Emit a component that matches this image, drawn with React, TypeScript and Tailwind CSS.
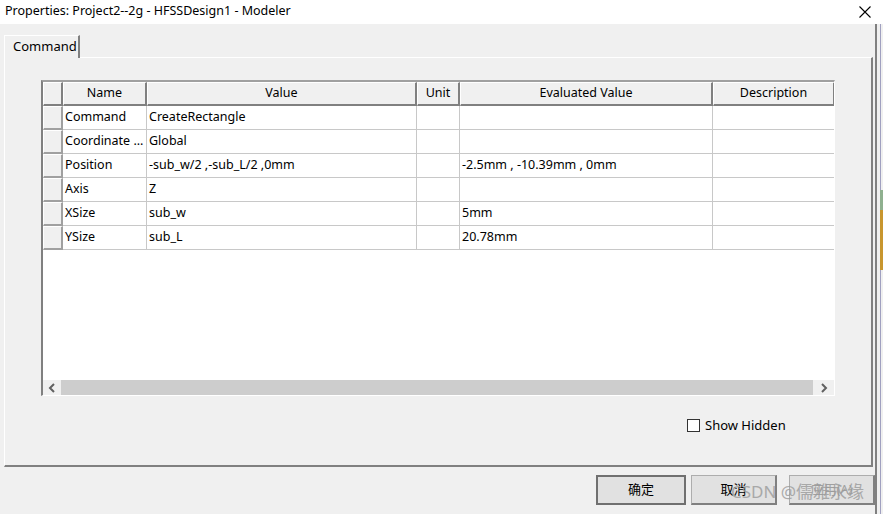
import React from "react";

type Row = { name: string; value: string; unit: string; evaluated: string; description: string };

const rows: Row[] = [
  { name: "Command", value: "CreateRectangle", unit: "", evaluated: "", description: "" },
  { name: "Coordinate ...", value: "Global", unit: "", evaluated: "", description: "" },
  { name: "Position", value: "-sub_w/2 ,-sub_L/2 ,0mm", unit: "", evaluated: "-2.5mm , -10.39mm , 0mm", description: "" },
  { name: "Axis", value: "Z", unit: "", evaluated: "", description: "" },
  { name: "XSize", value: "sub_w", unit: "", evaluated: "5mm", description: "" },
  { name: "YSize", value: "sub_L", unit: "", evaluated: "20.78mm", description: "" },
];

const columns = [
  { key: "name", label: "Name", width: "w-[84px]" },
  { key: "value", label: "Value", width: "w-[270px]" },
  { key: "unit", label: "Unit", width: "w-[43px]" },
  { key: "evaluated", label: "Evaluated Value", width: "w-[253px]" },
  { key: "description", label: "Description", width: "w-[122px]" },
] as const;

function HeaderCell({ label, width }: { label: string; width: string }) {
  return (
    <div
      className={`${width} h-[24px] shrink-0 flex items-center justify-center bg-[#f0f0f0] border-t border-l border-t-white border-l-white border-b-2 border-r-2 border-b-[#808080] border-r-[#808080]`}
    >
      {label}
    </div>
  );
}

function GridTable() {
  return (
    <div className="w-[794px] h-[316px] flex flex-col border-l-2 border-t-2 border-l-[#808080] border-t-[#a0a0a0] border-r border-b border-r-white border-b-white bg-white text-[12.5px]">
      <div className="flex-1 overflow-hidden">
        <div className="flex">
          <div className="w-[20px] h-[24px] shrink-0 bg-[#f0f0f0] border-t border-l border-t-white border-l-white border-b-2 border-r-2 border-b-[#808080] border-r-[#808080]" />
          {columns.map((c) => (
            <HeaderCell key={c.key} label={c.label} width={c.width} />
          ))}
        </div>
        {rows.map((r) => (
          <div key={r.name} className="flex h-[24px]">
            <div className="w-[20px] shrink-0 bg-[#f0f0f0] border-t border-l border-t-white border-l-white border-b-2 border-r-2 border-b-[#a0a0a0] border-r-[#a0a0a0]" />
            {columns.map((c) => (
              <div
                key={c.key}
                className={`${c.width} shrink-0 flex items-center pl-[2px] pb-[1px] border-b border-r border-[#c8c8c8] whitespace-nowrap overflow-hidden`}
              >
                {r[c.key]}
              </div>
            ))}
          </div>
        ))}
      </div>
      <div className="h-[15px] flex bg-[#f0f0f0]">
        <div className="w-[18px] flex items-center justify-center">
          <svg width="8" height="10" viewBox="0 0 8 10">
            <path d="M6 1 L2 5 L6 9" stroke="#606060" strokeWidth="2" fill="none" />
          </svg>
        </div>
        <div className="flex-1 bg-[#cdcdcd]" />
        <div className="w-[21px] flex items-center justify-center">
          <svg width="8" height="10" viewBox="0 0 8 10">
            <path d="M2 1 L6 5 L2 9" stroke="#606060" strokeWidth="2" fill="none" />
          </svg>
        </div>
      </div>
    </div>
  );
}

function Button({ label, isDefault, disabled }: { label: string; isDefault?: boolean; disabled?: boolean }) {
  return (
    <div
      className={`h-[30px] flex items-center justify-center bg-[#e1e1e1] ${
        isDefault
          ? "w-[91px] border-2 border-[#707070]"
          : "w-[87px] border border-[#adadad] border-b-2 border-r-2 border-b-[#808080] border-r-[#808080]"
      } ${disabled ? "text-[#a0a0a0]" : "text-black"}`}
    >
      {label}
    </div>
  );
}

export default function App() {
  return (
    <div
      className="relative w-[883px] h-[514px] bg-[#f0f0f0] overflow-hidden text-[13px] text-black"
      style={{ fontFamily: '"Noto Sans", "Noto Sans CJK SC", sans-serif' }}
    >
      <div className="h-[24px] bg-white flex items-center justify-between pl-[5px] pr-[12px]">
        <span className="text-[12.5px] pb-[2px]">Properties: Project2--2g - HFSSDesign1 - Modeler</span>
        <svg width="12" height="12" viewBox="0 0 12 12">
          <path d="M0.5 0.5 L11.5 11.5 M11.5 0.5 L0.5 11.5" stroke="#000" strokeWidth="1.1" />
        </svg>
      </div>

      <div className="flex">
        <div className="w-[875px] flex flex-col">
          <div className="h-[10px]" />
          <div className="flex pl-[4px]">
            <div className="h-[23px] w-[76px] flex items-center pl-[8px] pb-[1px] bg-[#f0f0f0] border-t border-l border-white border-r-2 border-r-[#808080] relative top-[1px] z-10">
              Command
            </div>
          </div>
          <div className="ml-[4px] w-[869px] h-[410px] border-t border-l border-white border-r-2 border-b-2 border-r-[#808080] border-b-[#808080] flex flex-col">
            <div className="pl-[36px] pt-[22px]">
              <GridTable />
            </div>
            <div className="flex items-center pl-[682px] pt-[20px] gap-[5px]">
              <div className="w-[13px] h-[13px] bg-white border border-[#333]" />
              <span>Show Hidden</span>
            </div>
          </div>
          <div className="flex pl-[596px] pt-[8px] gap-[5px]">
            <Button label="确定" isDefault />
            <Button label="取消" />
            <div className="w-[2px]" />
            <Button label="应用(A)" disabled />
          </div>
        </div>
        <div className="w-[8px] h-[490px] flex">
          <div className="w-[5px] border-l-2 border-[#808080]" />
          <div className="w-[3px] flex flex-col">
            <div className="h-[166px] border-l border-[#a0a0c0]" />
            <div className="h-[20px] bg-[#8fb08f]" />
            <div className="h-[60px] bg-[#c8962e]" />
            <div className="flex-1 border-l border-[#a0a0c0]" />
          </div>
        </div>
      </div>

      <span className="absolute left-[731px] top-[479px] text-[17px] text-[#9a9a9a] opacity-80">
        CSDN @儒雅永缘
      </span>
    </div>
  );
}
